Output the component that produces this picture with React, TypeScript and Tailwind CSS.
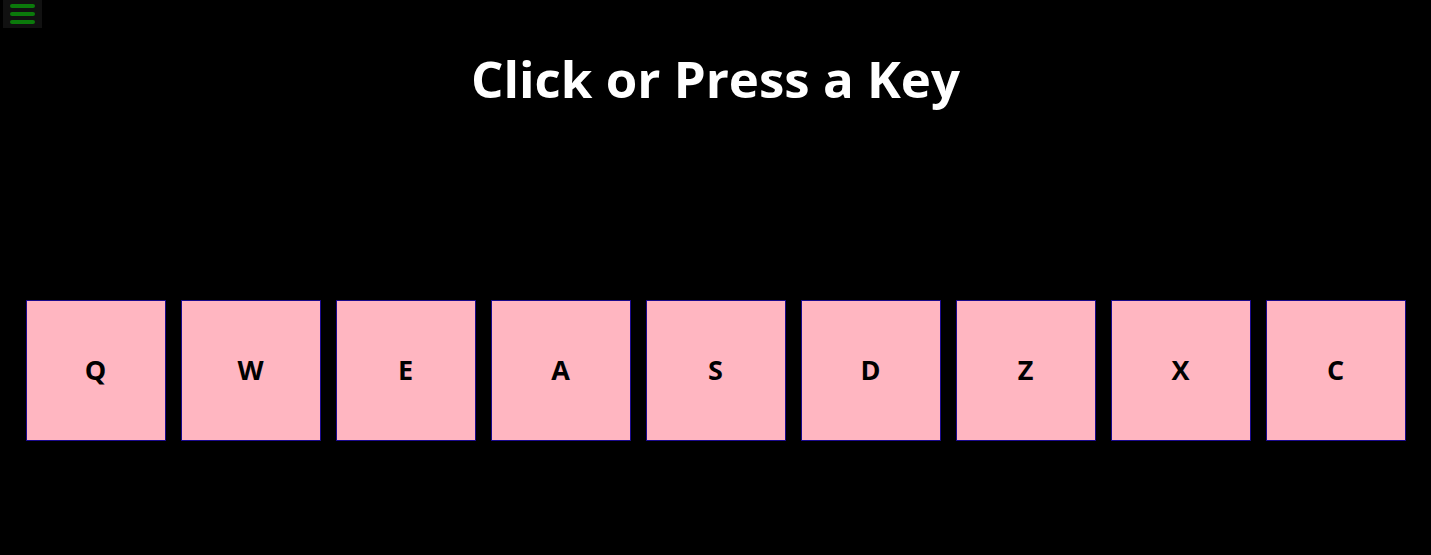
const KEYS = ["Q", "W", "E", "A", "S", "D", "Z", "X", "C"];

function MenuButton() {
  return (
    <button className="absolute left-[3px] top-0 flex h-[28px] w-[39px] flex-col items-center justify-center gap-[4px] bg-[#111111]">
      <span className="h-[4px] w-[25px] rounded-full bg-[#0b7a0b]" />
      <span className="h-[4px] w-[25px] rounded-full bg-[#0b7a0b]" />
      <span className="h-[4px] w-[25px] rounded-full bg-[#0b7a0b]" />
    </button>
  );
}

export default function App() {
  return (
    <div className="relative h-[555px] w-full overflow-hidden bg-black font-['Comic_Sans_MS','Open_Sans',sans-serif]">
      <MenuButton />
      <h1 className="pt-[45px] text-center text-[51px] leading-[66px] font-bold text-white">
        Click or Press a Key
      </h1>
      <div className="mt-[189px] flex justify-center gap-[15px]">
        {KEYS.map((k) => (
          <div
            key={k}
            className="flex h-[141px] w-[140px] items-center justify-center border border-[#1a0a8c] bg-[#ffb6c1] text-[27px] font-bold text-black"
          >
            {k}
          </div>
        ))}
      </div>
    </div>
  );
}
